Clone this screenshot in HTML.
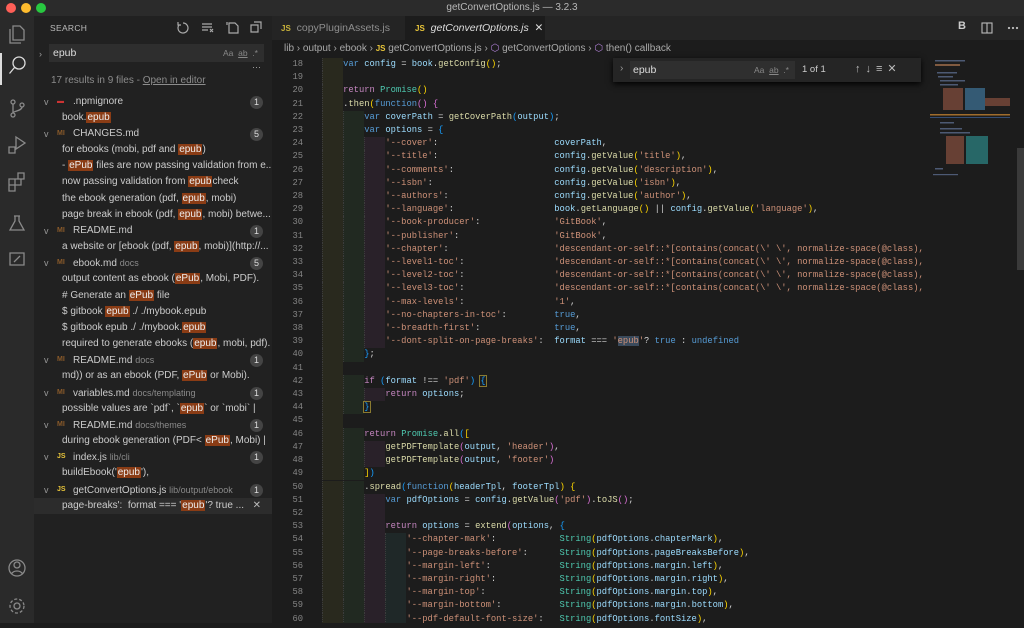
<!DOCTYPE html>
<html><head><meta charset="utf-8">
<style>
*{margin:0;padding:0;box-sizing:border-box}
body{width:1024px;height:623px;overflow:hidden;background:#1c1c1c;font-family:"Liberation Sans",sans-serif;position:relative}
.abs{position:absolute}
#title{left:0;top:0;width:1024px;height:16px;background:#2b2b2b;color:#b8b8b8;font-size:10px;text-align:center;line-height:16px}
.dot{top:3px;width:10px;height:10px;border-radius:50%}
#act{left:0;top:16px;width:34px;height:607px;background:#2a2a2a}
#side{left:34px;top:16px;width:238px;height:607px;background:#212121;color:#cccccc;font-size:10px}
#tabs{left:272px;top:16px;width:752px;height:24px;background:#252525}
#crumb{left:272px;top:40px;width:752px;height:18px;background:#1c1c1c;color:#a9a9a9;font-size:10px;line-height:18px;padding-left:12px;white-space:nowrap}
#gut{left:272px;top:58px;width:31px;color:#858585;font:8.8px/13.2px "Liberation Mono",monospace;text-align:right}
#code{left:322px;top:58px;width:606px;height:565px;overflow:hidden;color:#d4d4d4;font:8.8px/13.2px "Liberation Mono",monospace;white-space:pre}
.k{color:#569cd6}.c{color:#c586c0}.f{color:#dcdcaa}.v{color:#9cdcfe}.s{color:#ce9178}.t{color:#4ec9b0}
.b1{color:#ffd700}.b2{color:#da70d6}.b3{color:#179fff}
i{font-style:normal;display:inline-block;width:21.12px;height:13.2px;vertical-align:top;border-left:1px dotted #3c3c3c}
.g1{background:rgba(255,255,64,.06)}.g2{background:rgba(127,255,127,.06)}.g3{background:rgba(255,127,255,.06)}.g4{background:rgba(79,236,236,.06)}
.row{position:absolute;left:0;width:238px;height:16px;line-height:16px;white-space:nowrap;overflow:hidden}
.m{background:#8a3c15;color:#eee;padding:0 1px}
.badge{position:absolute;right:9px;top:2px;width:13px;height:13px;border-radius:50%;background:#444;color:#ddd;font-size:9px;line-height:13px;text-align:center}
.ch{position:absolute;left:10px;color:#999;font-size:9px}
.fi{position:absolute;left:23px;font-size:7px;font-weight:bold}
.dim{color:#8a8a8a;font-size:9px}
</style></head><body>
<div id="title" class="abs">getConvertOptions.js — 3.2.3</div>
<div class="abs dot" style="left:6px;background:#fe5f57"></div>
<div class="abs dot" style="left:21px;background:#febc2e"></div>
<div class="abs dot" style="left:36px;background:#28c840"></div>

<div id="act" class="abs">
<svg width="34" height="607" fill="none" stroke="#8a8a8a" stroke-width="1.3">
<path d="M13 10h7l4 4v10h-11z M10 13v14h11"/>
<rect x="0" y="37" width="2" height="32" fill="#ddd" stroke="none"/>
<circle cx="19" cy="47" r="6" stroke="#ddd"/><path d="M14.5 51.5l-5 6" stroke="#ddd"/>
<circle cx="13" cy="86" r="2"/><circle cx="13" cy="99" r="2"/><circle cx="22" cy="89" r="2"/><path d="M13 88v9 M22 91c0 4-9 4-9 6"/>
<path d="M16 121l9 6-9 6z M9 131h6v6h-6z"/>
<path d="M9 163h6v6h-6z M15 163h6v6h-6z M9 169h6v6h-6z M18 157h6v6h-6z"/>
<path d="M14 200h6 M15 200v5l-5 9h14l-5-9v-5"/>
<path d="M10 237h14v12h-14z M14 246l6-6"/>
<circle cx="17" cy="552" r="8"/><circle cx="17" cy="549" r="3"/><path d="M11.5 558c2-4 9-4 11 0"/>
<circle cx="17" cy="590" r="3"/><circle cx="17" cy="590" r="7" stroke-dasharray="3 2"/>
</svg></div>

<div id="side" class="abs">
<div class="abs" style="left:16px;top:7px;font-size:8.5px;color:#bbb;letter-spacing:.3px">SEARCH</div>
<svg class="abs" style="left:140px;top:3px" width="90" height="16" fill="none" stroke="#aaa" stroke-width="1.2">
<path d="M9 4a5 5 0 1 1-4 2 M4 3v3h3"/>
<path d="M28 5h10 M28 8h10 M28 11h6 M36 10l3 3 M39 10l-3 3"/>
<path d="M55 4h6l3 3v7h-9z M53 3v3"/>
<path d="M77 6h7v7h-7z M80 3h7v7"/>
</svg>
<div class="abs" style="left:5px;top:33px;color:#999;font-size:9px">›</div>
<div class="abs" style="left:15px;top:28px;width:215px;height:18px;background:#2e2e2e;padding-left:4px;line-height:18px;font-size:10.5px;color:#ddd">epub<span style="position:absolute;right:6px;color:#888;font-size:8.5px">Aa &nbsp;<u>ab</u>&nbsp; .*</span></div>
<div class="abs" style="left:218px;top:46px;color:#aaa;font-size:9px">···</div>
<div class="abs" style="left:17px;top:59px;color:#8c8c8c;font-size:10px">17 results in 9 files - <u>Open in editor</u></div>
<div class="abs" style="left:0;top:78px;width:238px;">
<div class="row" style="top:0"><span class="ch">v</span><span class="fi" style="color:#c33">▬</span><span style="position:absolute;left:39px">.npmignore</span><span class="badge">1</span></div>
<div class="row" style="top:16px;padding-left:28px">book.<span class="m">epub</span></div>
<div class="row" style="top:32px"><span class="ch">v</span><span class="fi" style="color:#8a5a2a">MI</span><span style="position:absolute;left:39px">CHANGES.md</span><span class="badge">5</span></div>
<div class="row" style="top:48px;padding-left:28px">for ebooks (mobi, pdf and <span class="m">epub</span>)</div>
<div class="row" style="top:64px;padding-left:28px;width:238px">- <span class="m">ePub</span> files are now passing validation from e...</div>
<div class="row" style="top:80px;padding-left:28px">now passing validation from <span class="m">epub</span>check</div>
<div class="row" style="top:97px;padding-left:28px">the ebook generation (pdf, <span class="m">epub</span>, mobi)</div>
<div class="row" style="top:113px;padding-left:28px">page break in ebook (pdf, <span class="m">epub</span>, mobi) betwe...</div>
<div class="row" style="top:129px"><span class="ch">v</span><span class="fi" style="color:#8a5a2a">MI</span><span style="position:absolute;left:39px">README.md</span><span class="badge">1</span></div>
<div class="row" style="top:145px;padding-left:28px">a website or [ebook (pdf, <span class="m">epub</span>, mobi)](http://...</div>
<div class="row" style="top:161px"><span class="ch">v</span><span class="fi" style="color:#8a5a2a">MI</span><span style="position:absolute;left:39px">ebook.md <span class="dim">docs</span></span><span class="badge">5</span></div>
<div class="row" style="top:177px;padding-left:28px">output content as ebook (<span class="m">ePub</span>, Mobi, PDF).</div>
<div class="row" style="top:194px;padding-left:28px"># Generate an <span class="m">ePub</span> file</div>
<div class="row" style="top:210px;padding-left:28px">$ gitbook <span class="m">epub</span> ./ ./mybook.epub</div>
<div class="row" style="top:226px;padding-left:28px">$ gitbook epub ./ ./mybook.<span class="m">epub</span></div>
<div class="row" style="top:242px;padding-left:28px">required to generate ebooks (<span class="m">epub</span>, mobi, pdf).</div>
<div class="row" style="top:258px"><span class="ch">v</span><span class="fi" style="color:#8a5a2a">MI</span><span style="position:absolute;left:39px">README.md <span class="dim">docs</span></span><span class="badge">1</span></div>
<div class="row" style="top:274px;padding-left:28px">md)) or as an ebook (PDF, <span class="m">ePub</span> or Mobi).</div>
<div class="row" style="top:291px"><span class="ch">v</span><span class="fi" style="color:#8a5a2a">MI</span><span style="position:absolute;left:39px">variables.md <span class="dim">docs/templating</span></span><span class="badge">1</span></div>
<div class="row" style="top:307px;padding-left:28px">possible values are `pdf`, `<span class="m">epub</span>` or `mobi` |</div>
<div class="row" style="top:323px"><span class="ch">v</span><span class="fi" style="color:#8a5a2a">MI</span><span style="position:absolute;left:39px">README.md <span class="dim">docs/themes</span></span><span class="badge">1</span></div>
<div class="row" style="top:339px;padding-left:28px">during ebook generation (PDF&lt; <span class="m">ePub</span>, Mobi) |</div>
<div class="row" style="top:355px"><span class="ch">v</span><span class="fi" style="color:#e8c53a">JS</span><span style="position:absolute;left:39px">index.js <span class="dim">lib/cli</span></span><span class="badge">1</span></div>
<div class="row" style="top:371px;padding-left:28px">buildEbook('<span class="m">epub</span>'),</div>
<div class="row" style="top:388px"><span class="ch">v</span><span class="fi" style="color:#e8c53a">JS</span><span style="position:absolute;left:39px">getConvertOptions.js <span class="dim">lib/output/ebook</span></span><span class="badge">1</span></div>
<div class="row" style="top:404px;padding-left:28px;background:#2c2c2c">page-breaks':&nbsp; format === '<span class="m">epub</span>'? true ...<span style="position:absolute;right:11px;color:#bbb">✕</span></div>
</div>
</div>

<div id="tabs" class="abs">
<div class="abs" style="left:0;top:0;width:133px;height:24px;background:#242424;line-height:24px;font-size:10.5px;color:#8e8e8e;padding-left:9px"><b style="color:#c9b33a;font-size:8px">JS</b>&nbsp; copyPluginAssets.js</div>
<div class="abs" style="left:133px;top:0;width:140px;height:24px;background:#1c1c1c;line-height:24px;font-size:10.5px;color:#ddd;padding-left:10px"><b style="color:#e8c53a;font-size:8px">JS</b>&nbsp; <i style="display:inline;border:0;width:auto;font-style:italic;background:none">getConvertOptions.js</i> &nbsp;✕</div>
<div class="abs" style="left:686px;top:4px;color:#ccc;font-size:11px;font-weight:bold">B</div>
<svg class="abs" style="left:708px;top:6px" width="40" height="12" fill="none" stroke="#bbb" stroke-width="1.1"><rect x="2" y="1" width="10" height="10"/><path d="M7 1v10"/><circle cx="29" cy="6" r=".6" fill="#bbb"/><circle cx="33" cy="6" r=".6" fill="#bbb"/><circle cx="37" cy="6" r=".6" fill="#bbb"/></svg>
</div>
<div id="crumb" class="abs">lib › output › ebook › <b style="color:#e8c53a;font-size:8px">JS</b> getConvertOptions.js › <span style="color:#b180d7">⬡</span> getConvertOptions › <span style="color:#b180d7">⬡</span> then() callback</div>

<div id="gut" class="abs">18<br>19<br>20<br>21<br>22<br>23<br>24<br>25<br>26<br>27<br>28<br>29<br>30<br>31<br>32<br>33<br>34<br>35<br>36<br>37<br>38<br>39<br>40<br>41<br>42<br>43<br>44<br>45<br>46<br>47<br>48<br>49<br>50<br>51<br>52<br>53<br>54<br>55<br>56<br>57<br>58<br>59<br>60</div>

<div id="code" class="abs"><i class="g1"></i><span class="k">var</span> <span class="v">config</span> = <span class="v">book</span>.<span class="f">getConfig</span><span class="b1">()</span>;
<i class="g1"></i>
<i class="g1"></i><span class="c">return</span> <span class="t">Promise</span><span class="b1">()</span>
<i class="g1"></i>.<span class="f">then</span><span class="b1">(</span><span class="k">function</span><span class="b2">()</span> <span class="b2">{</span>
<i class="g1"></i><i class="g2"></i><span class="k">var</span> <span class="v">coverPath</span> = <span class="f">getCoverPath</span><span class="b3">(</span><span class="v">output</span><span class="b3">)</span>;
<i class="g1"></i><i class="g2"></i><span class="k">var</span> <span class="v">options</span> = <span class="b3">{</span>
<i class="g1"></i><i class="g2"></i><i class="g3"></i><span class="s">'--cover'</span>:                      <span class="v">coverPath</span>,
<i class="g1"></i><i class="g2"></i><i class="g3"></i><span class="s">'--title'</span>:                      <span class="v">config</span>.<span class="f">getValue</span><span class="b1">(</span><span class="s">'title'</span><span class="b1">)</span>,
<i class="g1"></i><i class="g2"></i><i class="g3"></i><span class="s">'--comments'</span>:                   <span class="v">config</span>.<span class="f">getValue</span><span class="b1">(</span><span class="s">'description'</span><span class="b1">)</span>,
<i class="g1"></i><i class="g2"></i><i class="g3"></i><span class="s">'--isbn'</span>:                       <span class="v">config</span>.<span class="f">getValue</span><span class="b1">(</span><span class="s">'isbn'</span><span class="b1">)</span>,
<i class="g1"></i><i class="g2"></i><i class="g3"></i><span class="s">'--authors'</span>:                    <span class="v">config</span>.<span class="f">getValue</span><span class="b1">(</span><span class="s">'author'</span><span class="b1">)</span>,
<i class="g1"></i><i class="g2"></i><i class="g3"></i><span class="s">'--language'</span>:                   <span class="v">book</span>.<span class="f">getLanguage</span><span class="b1">()</span> || <span class="v">config</span>.<span class="f">getValue</span><span class="b1">(</span><span class="s">'language'</span><span class="b1">)</span>,
<i class="g1"></i><i class="g2"></i><i class="g3"></i><span class="s">'--book-producer'</span>:              <span class="s">'GitBook'</span>,
<i class="g1"></i><i class="g2"></i><i class="g3"></i><span class="s">'--publisher'</span>:                  <span class="s">'GitBook'</span>,
<i class="g1"></i><i class="g2"></i><i class="g3"></i><span class="s">'--chapter'</span>:                    <span class="s">'descendant-or-self::*[contains(concat(\' \', normalize-space(@class),</span>
<i class="g1"></i><i class="g2"></i><i class="g3"></i><span class="s">'--level1-toc'</span>:                 <span class="s">'descendant-or-self::*[contains(concat(\' \', normalize-space(@class),</span>
<i class="g1"></i><i class="g2"></i><i class="g3"></i><span class="s">'--level2-toc'</span>:                 <span class="s">'descendant-or-self::*[contains(concat(\' \', normalize-space(@class),</span>
<i class="g1"></i><i class="g2"></i><i class="g3"></i><span class="s">'--level3-toc'</span>:                 <span class="s">'descendant-or-self::*[contains(concat(\' \', normalize-space(@class),</span>
<i class="g1"></i><i class="g2"></i><i class="g3"></i><span class="s">'--max-levels'</span>:                 <span class="s">'1'</span>,
<i class="g1"></i><i class="g2"></i><i class="g3"></i><span class="s">'--no-chapters-in-toc'</span>:         <span class="k">true</span>,
<i class="g1"></i><i class="g2"></i><i class="g3"></i><span class="s">'--breadth-first'</span>:              <span class="k">true</span>,
<i class="g1"></i><i class="g2"></i><i class="g3"></i><span class="s">'--dont-split-on-page-breaks'</span>:  <span class="v">format</span> === <span class="s">'<span style="background:#3a4a5c">epub</span>'</span>? <span class="k">true</span> : <span class="k">undefined</span>
<i class="g1"></i><i class="g2"></i><span class="b3">}</span>;
<i class="g1"></i>
<i class="g1"></i><i class="g2"></i><span class="c">if</span> <span class="b3">(</span><span class="v">format</span> !== <span class="s">'pdf'</span><span class="b3">)</span> <span class="b3" style="outline:1px solid #8a7a30">{</span>
<i class="g1"></i><i class="g2"></i><i class="g3"></i><span class="c">return</span> <span class="v">options</span>;
<i class="g1"></i><i class="g2"></i><span class="b3" style="outline:1px solid #8a7a30">}</span>
<i class="g1"></i>
<i class="g1"></i><i class="g2"></i><span class="c">return</span> <span class="t">Promise</span>.<span class="f">all</span><span class="b3">(</span><span class="b1">[</span>
<i class="g1"></i><i class="g2"></i><i class="g3"></i><span class="f">getPDFTemplate</span><span class="b2">(</span><span class="v">output</span>, <span class="s">'header'</span><span class="b2">)</span>,
<i class="g1"></i><i class="g2"></i><i class="g3"></i><span class="f">getPDFTemplate</span><span class="b2">(</span><span class="v">output</span>, <span class="s">'footer'</span><span class="b2">)</span>
<i class="g1"></i><i class="g2"></i><span class="b1">]</span><span class="b3">)</span>
<i class="g1"></i><i class="g2"></i>.<span class="f">spread</span><span class="b3">(</span><span class="k">function</span><span class="b1">(</span><span class="v">headerTpl</span>, <span class="v">footerTpl</span><span class="b1">)</span> <span class="b1">{</span>
<i class="g1"></i><i class="g2"></i><i class="g3"></i><span class="k">var</span> <span class="v">pdfOptions</span> = <span class="v">config</span>.<span class="f">getValue</span><span class="b2">(</span><span class="s">'pdf'</span><span class="b2">)</span>.<span class="f">toJS</span><span class="b2">()</span>;
<i class="g1"></i><i class="g2"></i><i class="g3"></i>
<i class="g1"></i><i class="g2"></i><i class="g3"></i><span class="c">return</span> <span class="v">options</span> = <span class="f">extend</span><span class="b2">(</span><span class="v">options</span>, <span class="b3">{</span>
<i class="g1"></i><i class="g2"></i><i class="g3"></i><i class="g4"></i><span class="s">'--chapter-mark'</span>:            <span class="t">String</span><span class="b1">(</span><span class="v">pdfOptions</span>.<span class="v">chapterMark</span><span class="b1">)</span>,
<i class="g1"></i><i class="g2"></i><i class="g3"></i><i class="g4"></i><span class="s">'--page-breaks-before'</span>:      <span class="t">String</span><span class="b1">(</span><span class="v">pdfOptions</span>.<span class="v">pageBreaksBefore</span><span class="b1">)</span>,
<i class="g1"></i><i class="g2"></i><i class="g3"></i><i class="g4"></i><span class="s">'--margin-left'</span>:             <span class="t">String</span><span class="b1">(</span><span class="v">pdfOptions</span>.<span class="v">margin</span>.<span class="v">left</span><span class="b1">)</span>,
<i class="g1"></i><i class="g2"></i><i class="g3"></i><i class="g4"></i><span class="s">'--margin-right'</span>:            <span class="t">String</span><span class="b1">(</span><span class="v">pdfOptions</span>.<span class="v">margin</span>.<span class="v">right</span><span class="b1">)</span>,
<i class="g1"></i><i class="g2"></i><i class="g3"></i><i class="g4"></i><span class="s">'--margin-top'</span>:              <span class="t">String</span><span class="b1">(</span><span class="v">pdfOptions</span>.<span class="v">margin</span>.<span class="v">top</span><span class="b1">)</span>,
<i class="g1"></i><i class="g2"></i><i class="g3"></i><i class="g4"></i><span class="s">'--margin-bottom'</span>:           <span class="t">String</span><span class="b1">(</span><span class="v">pdfOptions</span>.<span class="v">margin</span>.<span class="v">bottom</span><span class="b1">)</span>,
<i class="g1"></i><i class="g2"></i><i class="g3"></i><i class="g4"></i><span class="s">'--pdf-default-font-size'</span>:   <span class="t">String</span><span class="b1">(</span><span class="v">pdfOptions</span>.<span class="v">fontSize</span><span class="b1">)</span>,
</div>

<div class="abs" style="left:613px;top:58px;width:308px;height:24px;background:#252525;box-shadow:0 2px 6px #000">
<span class="abs" style="left:7px;top:5px;color:#999;font-size:10px">›</span>
<div class="abs" style="left:17px;top:3px;width:165px;height:18px;background:#2f2f2f;color:#ddd;font-size:10.5px;line-height:18px;padding-left:3px">epub<span class="abs" style="right:6px;top:0;color:#888;font-size:8.5px">Aa &nbsp;<u>ab</u>&nbsp; .*</span></div>
<span class="abs" style="left:189px;top:6px;color:#ccc;font-size:9.5px">1 of 1</span>
<span class="abs" style="left:242px;top:4px;color:#bbb;font-size:11px;letter-spacing:5px">↑↓≡✕</span>
</div>

<div class="abs" style="left:930px;top:58px;width:80px;height:565px">
<svg width="80" height="120"><g fill="#5a6a8a" opacity=".8">
<rect x="5" y="2" width="30" height="1.5"/><rect x="5" y="6" width="25" height="2" fill="#9a6a4a"/><rect x="7" y="14" width="20" height="1.5"/><rect x="8" y="18" width="15" height="1.5"/><rect x="10" y="22" width="25" height="1.5"/><rect x="10" y="26" width="18" height="1.5"/>
<rect x="13" y="30" width="20" height="22" fill="#7a4a3a"/><rect x="35" y="30" width="20" height="22" fill="#3a6a8a"/><rect x="55" y="40" width="25" height="8" fill="#7a4a3a"/>
<rect x="0" y="56" width="80" height="1.5" fill="#c08030"/><rect x="0" y="59" width="80" height="1" fill="#3a5a8a"/>
<rect x="10" y="64" width="14" height="1.5"/><rect x="10" y="70" width="22" height="1.5"/><rect x="10" y="74" width="30" height="1.5"/>
<rect x="16" y="78" width="18" height="28" fill="#7a4a3a"/><rect x="36" y="78" width="22" height="28" fill="#2a7a7a"/>
<rect x="5" y="110" width="8" height="1.5"/><rect x="3" y="116" width="25" height="1.2"/></g></svg></div>
<div class="abs" style="left:1017px;top:148px;width:7px;height:122px;background:#3a3a3a"></div>
</body></html>
